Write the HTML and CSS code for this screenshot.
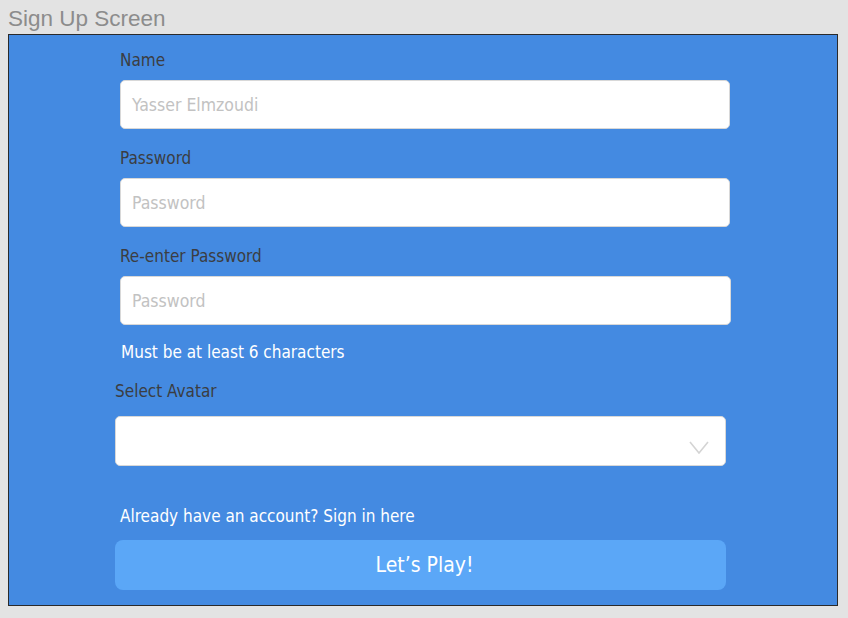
FILE: index.html
```html
<!DOCTYPE html>
<html>
<head>
<meta charset="utf-8">
<link rel="stylesheet" href="styles.css">
</head>
<body>
<div class="title">Sign Up Screen</div>
<div class="frame">
  <div class="form">
    <div class="label l-name">Name</div>
    <div class="input"><span class="ph">Yasser Elmzoudi</span></div>
    <div class="label l-pass">Password</div>
    <div class="input"><span class="ph">Password</span></div>
    <div class="label l-pass">Re-enter Password</div>
    <div class="input wide"><span class="ph">Password</span></div>
    <div class="hint">Must be at least 6 characters</div>
    <div class="label l-avatar">Select Avatar</div>
    <div class="select">
      <svg class="chev" width="20" height="13" viewBox="0 0 20 13"><path d="M1 1 L10 12 L19 1" fill="none" stroke="#d4d4d4" stroke-width="1.6"/></svg>
    </div>
    <div class="signin">Already have an account? Sign in here</div>
    <div class="btn">Let’s Play!</div>
  </div>
</div>
</body>
</html>
```
FILE: styles.css
```css
html, body { margin: 0; padding: 0; }
body {
  background: #e3e3e3;
  width: 848px;
  height: 618px;
  overflow: hidden;
  font-family: "Liberation Sans Narrow", "DejaVu Sans Condensed", "Liberation Sans", sans-serif;
}
.title {
  font-family: "Liberation Sans", Arial, sans-serif;
  font-size: 22.5px;
  color: #8c8c8c;
  padding: 6px 0 0 8px;
  height: 34px;
  line-height: 26px;
  box-sizing: border-box;
}
.frame {
  margin-left: 8px;
  width: 830px;
  height: 572px;
  box-sizing: border-box;
  border: 1px solid #2a2a2a;
  background: #448ae1;
  padding-top: 13px;
}
.form {
  display: flex;
  flex-direction: column;
  padding-left: 111px;
}
.label {
  height: 24px;
  line-height: 24px;
  font-size: 17px;
  color: #3b3d42;
  margin-left: 0;
}
.l-name { margin-bottom: 8px; }
.l-pass { margin-top: 17px; margin-bottom: 8px; }
.input {
  width: 610px;
  height: 49px;
  box-sizing: border-box;
  background: #fff;
  border: 1px solid #d8d8d8;
  border-radius: 5px;
  display: flex;
  align-items: center;
  padding-left: 11px;
}
.input.wide { width: 611px; }
.ph { font-size: 17.5px; color: #c2c2c2; }
.hint {
  margin-top: 15px;
  height: 24px;
  line-height: 24px;
  font-size: 17px;
  color: #fff;
  padding-left: 1px;
}
.l-avatar { margin-top: 15px; margin-left: -5px; margin-bottom: 13px; }
.select {
  margin-left: -5px;
  width: 611px;
  height: 50px;
  box-sizing: border-box;
  background: #fff;
  border: 1px solid #d8d8d8;
  border-radius: 5px;
  display: flex;
  align-items: center;
  justify-content: flex-end;
  padding-right: 16px;
}
.chev { margin-top: 12px; }
.signin {
  margin-top: 38px;
  height: 24px;
  line-height: 24px;
  font-size: 17px;
  color: #fff;
}
.btn {
  margin-top: 12px;
  margin-left: -5px;
  width: 611px;
  height: 50px;
  box-sizing: border-box;
  padding-left: 8px;
  border-radius: 8px;
  background: #5ba7f7;
  color: #fff;
  font-size: 21px;
  display: flex;
  align-items: center;
  justify-content: center;
}
```
